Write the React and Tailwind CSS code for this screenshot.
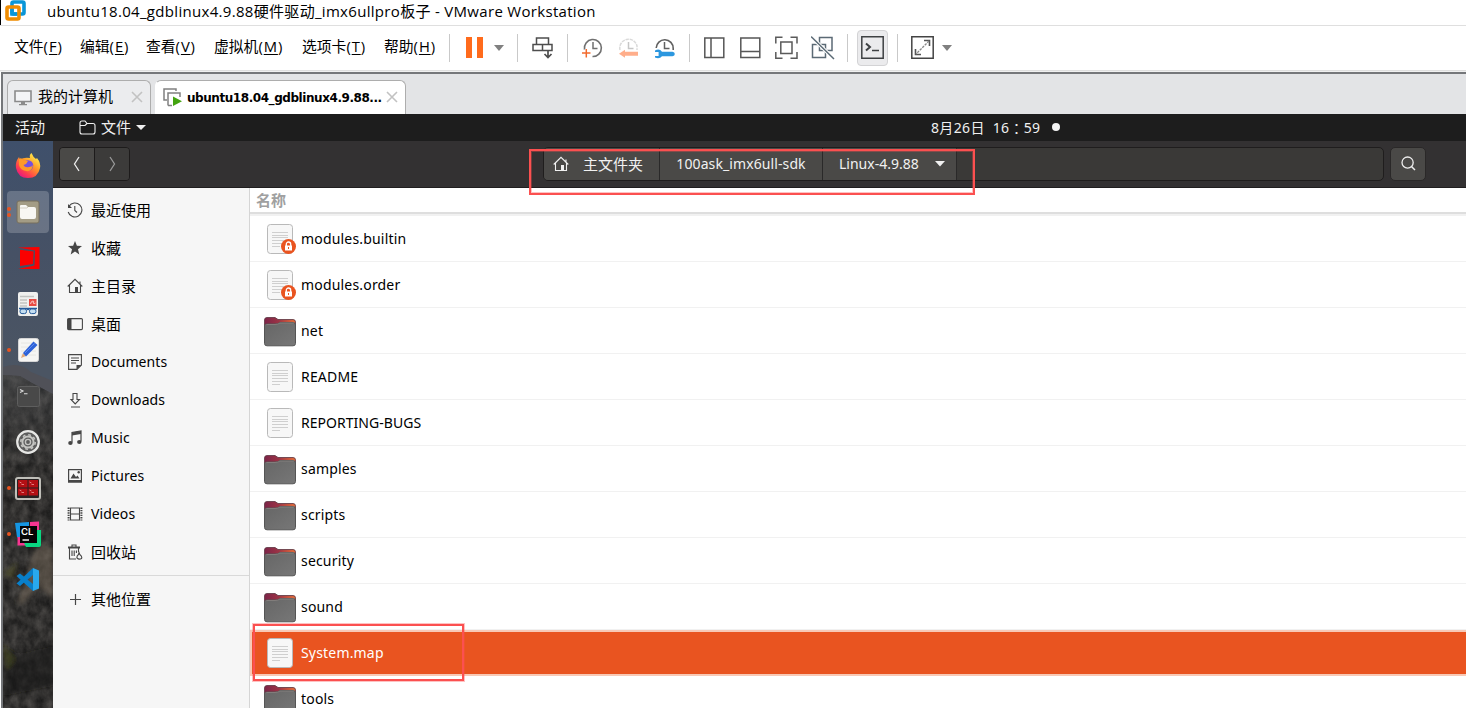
import React from 'react';

const latin = "font-['Noto_Sans','Noto_Sans_CJK_SC',sans-serif]";
const windows = "font-['Open_Sans','Noto_Sans_CJK_SC',sans-serif]";

function Svg({ w = 16, h = w, children, className = '' }) {
  return (
    <svg width={w} height={h} viewBox={`0 0 ${w} ${h}`} fill="none" className={`shrink-0 ${className}`}>
      {children}
    </svg>
  );
}

/* ---------- window title and menus ---------- */

function TitleBar() {
  return (
    <div className="flex h-[25px] shrink-0 items-center border-l border-black bg-white">
      <Svg w={21} h={21} className="ml-1 mb-1">
        <rect x="7" y="2" width="12" height="12" rx="1.5" stroke="#0a96d7" strokeWidth="3.6" />
        <rect x="2" y="7" width="12" height="12" rx="1.5" stroke="#f08c00" strokeWidth="3.6" />
        <path d="M7 9V14H12" stroke="#0a96d7" strokeWidth="3.6" />
      </Svg>
      <span className="ml-[21px] pb-[3px] text-[15px] leading-5 tracking-[0.31px] whitespace-nowrap text-black">
        ubuntu18.04_gdblinux4.9.88硬件驱动_imx6ullpro板子 - VMware Workstation
      </span>
    </div>
  );
}

const menus = [
  ['文件', 'F', 'w-[66px]'],
  ['编辑', 'E', 'w-[66px]'],
  ['查看', 'V', 'w-[68px]'],
  ['虚拟机', 'M', 'w-[88px]'],
  ['选项卡', 'T', 'w-[82px]'],
  ['帮助', 'H', 'w-[65px]'],
];

function Separator({ className }) {
  return <div className={`h-7 w-px shrink-0 bg-[#c9c9c9] ${className}`} />;
}

function Caret({ className }) {
  return (
    <Svg w={10} h={6} className={className}>
      <path d="M0 0H10L5 6Z" fill="#808080" />
    </Svg>
  );
}

function MenuBar() {
  return (
    <div className="flex h-[46px] shrink-0 items-center border-y border-[#dfdfdf] bg-white pb-px pl-[14px]">
      {menus.map(([label, key, width]) => (
        <span key={label} className={`${width} shrink-0 pb-[2px] text-[14.8px] whitespace-nowrap text-black`}>
          {label}
          <span className="tracking-[0.9px]">
            (<span className="underline underline-offset-2">{key}</span>)
          </span>
        </span>
      ))}
      <Separator />
      <Svg w={17} h={21} className="ml-4">
        <path d="M0 0H6V21H0ZM11 0H17V21H11Z" fill="#ff6b1c" />
      </Svg>
      <Caret className="ml-[11px]" />
      <Separator className="ml-[13px]" />
      <Svg w={22} h={22} className="ml-[14px]">
        <path d="M4.5 1H16.5V7.5H4.5ZM1 7.5H20V13.5H1ZM10.5 7.5V13.5" stroke="#4d4d4d" strokeWidth="1.5" />
        <path d="M16 13.5V20M12.5 17L16 20.5L19.5 17" stroke="#4d4d4d" strokeWidth="1.7" />
      </Svg>
      <Separator className="ml-[13px]" />
      <Svg w={22} h={22} className="ml-[14px]">
        <path d="M2.5 12.5A8.5 8.5 0 1 1 10.5 19.5" stroke="#707070" strokeWidth="1.6" />
        <path d="M11 5V11.5H15.5" stroke="#707070" strokeWidth="1.5" />
        <path d="M0 16H8.5M4.3 12V20.5" stroke="#f26a2c" strokeWidth="1.5" />
      </Svg>
      <Svg w={22} h={22} className="ml-[14px]">
        <path d="M2 13A8.7 8.7 0 0 1 19 9V13" stroke="#dadada" strokeWidth="1.5" strokeDasharray="3.4 .8" />
        <path d="M10.5 5V11.5H15.5" stroke="#c6c6c6" strokeWidth="1.5" />
        <path d="M1 16.7L7 12.8V14.8H20V18.8H7V20.8Z" fill="#ffae8b" />
      </Svg>
      <Svg w={22} h={22} className="ml-[14px]">
        <path d="M2.2 11A8.5 8.5 0 0 1 19.2 11.5V13" stroke="#606060" strokeWidth="1.6" />
        <path d="M10.5 5V11.5H15.5" stroke="#606060" strokeWidth="1.5" />
        <path d="M1 13.4Q5.5 11 8 14.8H18.5Q20.8 15 20.8 17Q20.8 19 18.5 19.2H8Q5.5 22.5 1 20.6V19H4.6V15H1Z" fill="#2c97df" />
      </Svg>
      <Separator className="ml-[13px]" />
      <Svg w={22} h={22} className="ml-[14px]">
        <path d="M.8 1H19.8V20.5H.8ZM7 1V20.5" stroke="#565656" strokeWidth="1.5" />
      </Svg>
      <Svg w={22} h={22} className="ml-[14px]">
        <path d="M.8 1H19.8V20.5H.8ZM.8 14.5H19.8" stroke="#565656" strokeWidth="1.5" />
      </Svg>
      <Svg w={24} h={24} className="ml-[13px]">
        <path d="M.8 7.5V1.2H7.5M15.5 1.2H22V7.5M22 16V22.3H15.5M7.5 22.3H.8V16M5.8 6H17V17.5H5.8Z" stroke="#5a5a5a" strokeWidth="1.5" />
      </Svg>
      <Svg w={24} h={24} className="ml-[12px]">
        <path d="M12 1.5H21V14.5H14.5V8.5H8.5V1.5H12M8.5 8.5H1.5V21.5H14.5V14.5H8.5Z" stroke="#5b6a75" strokeWidth="1.5" />
        <path d="M0 .5L23 23" stroke="#fff" strokeWidth="3.4" />
        <path d="M0 .5L23 23" stroke="#5b6a75" strokeWidth="1.5" />
      </Svg>
      <Separator className="ml-[12px]" />
      <div className="ml-[9px] flex h-9 w-[31px] shrink-0 items-center justify-center rounded border border-[#d3d3d5] bg-[#ebebed] pr-px pb-px">
        <Svg w={23} h={23}>
          <path d="M.8.8H22.2V22.2H.8Z" stroke="#3e4143" strokeWidth="1.5" />
          <path d="M5 7.5L9 11L5 14.5" stroke="#3e4143" strokeWidth="2" />
          <path d="M11 14.5H18" stroke="#3e4143" strokeWidth="1.5" />
        </Svg>
      </div>
      <Separator className="ml-[9px]" />
      <Svg w={23} h={23} className="ml-[13px]">
        <path d="M.8.8H22.2V22.2H.8Z" stroke="#444" strokeWidth="1.5" />
        <path d="M13 4.5H18.5V10M4.5 13V18.5H10" stroke="#555" strokeWidth="1.6" />
        <path d="M18 5L5 18" stroke="#888" strokeWidth="1.3" strokeDasharray="2.5 1" />
      </Svg>
      <Caret className="ml-2" />
    </div>
  );
}

function Close({ className }) {
  return (
    <Svg w={12} h={12} className={className}>
      <path d="M1 1L11 11M11 1L1 11" stroke="#c2c2c2" strokeWidth="1.6" />
    </Svg>
  );
}

function Tabs() {
  return (
    <div className="flex h-[40px] shrink-0 items-end bg-[#e3e4e6] pl-1">
      <div className="flex h-[34px] w-[144px] shrink-0 items-center rounded-t-md border border-b-0 border-[#adadad] bg-[#ebecee] pl-[6px]">
        <Svg w={18} h={16} className="mt-px">
          <path d="M1 1H17V11.5H1Z" stroke="#8b8b8b" strokeWidth="1.6" fill="#f4f5f7" />
          <path d="M7 12H11V14H7ZM5 14H13V15.3H5Z" fill="#8b8b8b" />
        </Svg>
        <span className="ml-1.5 pb-[2px] text-[15px] whitespace-nowrap text-black">我的计算机</span>
        <Close className="mb-px ml-[18px]" />
      </div>
      <div className="ml-1 flex h-[34px] w-[251px] shrink-0 items-center rounded-t-md border border-b-0 border-[#adadad] border-l-white bg-white pl-[7px]">
        <Svg w={19} h={19}>
          <path d="M4 12H1V1H13V3M5 17.5V5H17V9M5 17.5H9" stroke="#808080" strokeWidth="1.5" />
          <path d="M10 8.5L19 13.3L10 18Z" fill="#43a410" />
        </Svg>
        <span className="ml-[5px] font-['DejaVu_Sans'] text-[12px] font-bold tracking-[-0.44px] whitespace-nowrap text-black">
          ubuntu18.04_gdblinux4.9.88...
        </span>
        <Close className="mb-px ml-[4px]" />
      </div>
    </div>
  );
}

/* ---------- guest desktop ---------- */

function TopBar() {
  return (
    <div className="flex h-[27px] shrink-0 items-center bg-[#1d1d1d] pl-3 text-[15px] whitespace-nowrap text-[#f0f0f0]">
      <span className="w-16">活动</span>
      <Svg w={17} h={15}>
        <path d="M1 3Q1 1 3 1H6L8 3.5H14Q16 3.5 16 5.5V12Q16 14 14 14H3Q1 14 1 12ZM1 5.5H6L8 3.5" stroke="#f0f0f0" strokeWidth="1.1" />
      </Svg>
      <span className="ml-[5px] w-[31px]">文件</span>
      <Svg w={10} h={5} className="ml-[4px]">
        <path d="M0 0H10L5 5Z" fill="#f0f0f0" />
      </Svg>
      <span className="ml-[785px] text-[14px] tracking-[0.35px]">8月26日</span>
      <span className="ml-[8px] flex items-center text-[14px] tracking-[0.3px]">
        16<span lang="zh-TW" className="font-['Noto_Sans_CJK_TC',sans-serif] leading-5">：</span>59
      </span>
      <span className="mb-[2px] ml-[12px] size-2 rounded-full bg-[#f4f4f4]" />
    </div>
  );
}

const Firefox = () => (
  <Svg w={26} h={26}>
    <defs>
      <linearGradient id="fox" x1="22" y1="2" x2="5" y2="24" gradientUnits="userSpaceOnUse">
        <stop stopColor="#fff44f" /><stop offset=".4" stopColor="#ff9a27" /><stop offset=".75" stopColor="#ff3d4f" /><stop offset="1" stopColor="#e31587" />
      </linearGradient>
    </defs>
    <path d="M15 5Q14 2 16.5 0Q18 4 21 6L22 5Q26 10 25 15Q23 25 13 25Q3 25 1 15Q0 9 4 4L5 7Q8 4 15 5Z" fill="url(#fox)" />
    <circle cx="13" cy="12.5" r="5.3" fill="#7550dd" />
    <path d="M4 6Q7 4 9 8L13 8Q12 11 8.5 12Q10 15 14 14Q17 14 18 12Q17 19 11 18Q5 17 4 12Z" fill="#ff9927" />
  </Svg>
);

const FilesApp = () => (
  <Svg w={24} h={24}>
    <rect x="1" y="1" width="22" height="22" rx="2" fill="#a39c85" stroke="#776f5d" />
    <path d="M4 6Q4 5 5 5H10L12 7H18Q20 7 20 9V17Q20 19 18 19H6Q4 19 4 17Z" fill="#f8f7f3" />
    <path d="M4 8H11L12 7" stroke="#d5d0c3" />
  </Svg>
);

const RedApp = () => (
  <Svg w={22} h={22} className="ml-[2px]">
    <path d="M0 .5L21.5 0V22H0L16.5 18.5L17 3.5Z" fill="#fb0000" />
    <path d="M2 2.8L15.6 4.4L15 17L2 19Z" fill="#fb0000" />
  </Svg>
);

const Reader = () => (
  <Svg w={20} h={24}>
    <rect width="20" height="24" rx="2" fill="#f0f0ee" />
    <path d="M2 4.5H16M2 8H9M2 11H9M2 14H9" stroke="#c2c4c1" strokeWidth="1.3" />
    <rect x="11" y="7" width="7.5" height="7" fill="#e74a42" />
    <path d="M12.5 12Q13 9 15 9Q16.5 9 15 11Q16 12 17.5 11" stroke="#fff" strokeWidth=".7" />
    <path d="M1 16.5H19M9 18Q10 16 11 18" stroke="#245b9b" strokeWidth="1.3" />
    <rect x="2" y="17" width="6.5" height="4.6" rx="2" fill="#c4def1" stroke="#245b9b" />
    <rect x="11.5" y="17" width="6.5" height="4.6" rx="2" fill="#c4def1" stroke="#245b9b" />
  </Svg>
);

const Editor = () => (
  <Svg w={21} h={24}>
    <rect x=".5" y=".5" width="20" height="23" rx="2" fill="#f5f5f3" stroke="#d5d5d5" />
    <path d="M3 5H18M3 9H18M3 13H18M3 17H18" stroke="#e6e6e2" />
    <path d="M3 20L5 15L8 18Z" fill="#e4a875" />
    <path d="M5 15L15.5 3.5L19.5 7L8 18.5Z" fill="#2d62d8" />
    <path d="M7 15L16.5 5.5" stroke="#5c88ee" />
  </Svg>
);

const Terminal = () => (
  <Svg w={23} h={21}>
    <rect x=".5" y=".5" width="22" height="20" rx="2" fill="#494949" stroke="#5e5e5e" />
    <path d="M3 3.5L6 5L3 6.5M7 7.8H10.5" stroke="#ddd" strokeWidth="1.1" />
  </Svg>
);

const Settings = () => (
  <Svg w={24} h={24}>
    <circle cx="12" cy="12" r="10.8" fill="#5d5d5d" stroke="#e7e7e5" strokeWidth="2.2" />
    <circle cx="12" cy="12" r="5.6" stroke="#c4c4c1" strokeWidth="2" />
    <circle cx="12" cy="12" r="7.2" stroke="#c4c4c1" strokeWidth="1.6" strokeDasharray="2.8 2.85" />
    <circle cx="12" cy="12" r="2.6" stroke="#c4c4c1" strokeWidth="1.4" />
  </Svg>
);

const Terminator = () => (
  <Svg w={26} h={23}>
    <rect x="1" y="1" width="24" height="21" rx="2" fill="#272222" stroke="#c0bfb9" strokeWidth="2" />
    <path d="M3 3H12.5V10.5H3ZM13.5 3H23V10.5H13.5ZM3 11.5H12.5V18.5H3ZM13.5 11.5H23V18.5H13.5Z" fill="#b30f14" />
    <path d="M4.5 5L6.5 6M6.5 7.5H9M14.5 5L16.5 6M16.5 7.5H19M4.5 13L6.5 14M6.5 15.5H9M14.5 13L16.5 14M16.5 15.5H19" stroke="#e58a8a" strokeWidth=".9" />
  </Svg>
);

const CLion = () => (
  <span className="relative flex shrink-0">
    <Svg w={27} h={27}>
      <path d="M0 2L14 1V14L5 18L2 16Z" fill="#1596e3" />
      <path d="M14 1L24 .5V11L15 14V1ZM2.5 16H11V24.5H2.5Z" fill="#f83591" />
      <path d="M22 9H26V24Q26 26 24 26H11L9 22H22Z" fill="#09d681" />
      <path d="M5 5H22V22H5Z" fill="#050505" />
      <path d="M7.5 19H14" stroke="#fff" strokeWidth="1.4" />
    </Svg>
    <span className="absolute top-[6px] left-[6.5px] font-['Inter'] text-[9.5px] leading-[9px] font-semibold text-white">CL</span>
  </span>
);

const Code = () => (
  <Svg w={24} h={24}>
    <path d="M17 0L23 2.5V20.5L17 23Z" fill="#29a9ee" />
    <path d="M17 0V7L4 18L0.5 15.5ZM0.5 8L4 5.5L17 16V23Z" fill="#087fca" />
  </Svg>
);

const apps = [
  [Firefox, 0], [FilesApp, 2, true], [RedApp, 0], [Reader, 0], [Editor, 1],
  [Terminal, 0], [Settings, 0], [Terminator, 1], [CLion, 1], [Code, 0],
];

function Wallpaper() {
  return (
    <svg width="50" height="567" viewBox="0 0 50 567" preserveAspectRatio="none" className="absolute inset-0">
      <defs>
        <linearGradient id="sky" x2="0" y2="1">
          <stop stopColor="#3f506b" /><stop offset=".2" stopColor="#465165" /><stop offset=".4" stopColor="#4b5563" />
        </linearGradient>
        <filter id="rock" x="0" y="0" width="100%" height="100%" colorInterpolationFilters="sRGB">
          <feTurbulence type="fractalNoise" baseFrequency=".12 .09" numOctaves="4" seed="8" />
          <feColorMatrix values=".26 0 0 0 .065  .25 0 0 0 .065  .24 0 0 0 .065  0 0 0 0 1" />
        </filter>
        <filter id="soft"><feGaussianBlur stdDeviation="2" /></filter>
        <linearGradient id="haze" x2="0" y2="1"><stop stopColor="#5a5d61" stopOpacity=".45" /><stop offset="1" stopColor="#5a5d61" stopOpacity="0" /></linearGradient>
        <clipPath id="ridge"><path d="M0 234L17 235L29 242L50 253V567H0Z" /></clipPath>
      </defs>
      <rect width="50" height="567" fill="url(#sky)" />
      <path d="M0 226Q17 220 28 231L50 240V270H0Z" fill="#505158" />
      <g clipPath="url(#ridge)">
        <rect y="220" width="50" height="347" fill="#333" filter="url(#rock)" />
        <rect y="220" width="50" height="110" fill="url(#haze)" />
        <g filter="url(#soft)">
          <path d="M30 412L40 402L50 408V458L35 445L20 463L14 461L22 441Z" fill="#75695a" opacity=".5" />
          <path d="M0 506L17 513L50 505V545L0 555Z" fill="#161812" opacity=".55" />
          <path d="M0 503L12 518L4 529ZM0 432L14 422L10 438Z" fill="#5c5b22" opacity=".45" />
        </g>
      </g>
    </svg>
  );
}

function Dock() {
  return (
    <nav className="relative flex w-[50px] shrink-0 flex-col overflow-hidden">
      <Wallpaper />
      <div className="relative flex flex-col pt-[2px]">
        {apps.map(([Icon, dots, active], i) => (
          <div key={i} className="flex h-[46px] items-center">
            <div className={`relative ml-1 flex size-[42px] items-center justify-center rounded ${active ? 'bg-white/20' : ''}`}>
              <Icon />
              {dots > 0 && (
                <span className="absolute top-0 left-0 flex h-full flex-col justify-center gap-[2px]">
                  {Array.from({ length: dots }, (_, d) => (
                    <span key={d} className="size-1 rounded-full bg-[#e95420]" />
                  ))}
                </span>
              )}
            </div>
          </div>
        ))}
      </div>
    </nav>
  );
}

function House({ color }) {
  return (
    <Svg>
      <path d="M.7 8.5L8 1.3L15.3 8.5M2.5 7V14.5H13.5V7M13 6V3.5" stroke={color} strokeWidth="1.1" />
      <path d="M8 9H11V14.5H8Z" fill={color} />
    </Svg>
  );
}

function HeaderBar() {
  return (
    <div className="flex h-[47px] shrink-0 items-center border-b border-[#201e1f] bg-[#333132] pb-px pl-[6px]">
      <div className="flex h-[34px] w-[71px] shrink-0 overflow-hidden rounded-[4px] border border-[#1d1b1b]">
        <span className="flex w-[35px] items-center justify-center border-r border-[#1d1b1b] bg-[#4a4947]">
          <Svg w={8} h={16}><path d="M6 1L1.5 8L6 15" stroke="#eee" strokeWidth="1.3" /></Svg>
        </span>
        <span className="flex grow items-center justify-center bg-[#3c3b3a]">
          <Svg w={8} h={16}><path d="M2 1L6.5 8L2 15" stroke="#999" strokeWidth="1.3" /></Svg>
        </span>
      </div>
      <div className="ml-[413px] flex h-[34px] w-[841px] shrink-0 overflow-hidden rounded-[5px] border border-[#1f1d1d] bg-[#3a3937] text-[14px] whitespace-nowrap text-[#f1f1f1]">
        <span className="flex w-[116px] items-center border-r border-[#2a2929] bg-[#4a4947] pl-[9px]">
          <House color="#f1f1f1" />
          <span className="ml-[14px] pt-px text-[15px]">主文件夹</span>
        </span>
        <span className="flex w-[163px] items-center justify-center border-r border-[#2a2929] bg-[#4a4947] tracking-[0.1px]">
          100ask_imx6ull-sdk
        </span>
        <span className="flex w-[134px] items-center border-r border-[#2a2929] bg-[#4a4947] pl-4">
          <span className="w-20">Linux-4.9.88</span>
          <Svg w={10} h={6} className="ml-4"><path d="M0 0H10L5 5.5Z" fill="#f1f1f1" /></Svg>
        </span>
      </div>
      <div className="ml-[6px] flex h-[34px] w-[36px] shrink-0 items-center justify-center rounded-[5px] border border-[#2a2828] bg-[#4a4947]">
        <Svg w={15} h={15}>
          <circle cx="6.6" cy="6.6" r="5.6" stroke="#eee" strokeWidth="1.3" />
          <path d="M10.5 10.5L14 14" stroke="#eee" strokeWidth="1.5" />
        </Svg>
      </div>
    </div>
  );
}

const ink = '#464646';
const places = [
  ['最近使用', <Svg><path d="M2 4.2A7 7 0 1 1 1.2 10M7.8 4V8.5L10 10.5" stroke={ink} strokeWidth="1.1" /><path d="M1 2V6H5Z" fill={ink} /></Svg>],
  ['收藏', <Svg><path d="M8 1L9.9 5.8L15 6.1L11 9.3L12.3 14.5L8 11.6L3.7 14.5L5 9.3L1 6.1L6.1 5.8Z" fill={ink} /></Svg>],
  ['主目录', <House color={ink} />],
  ['桌面', <Svg><rect x=".6" y="2.6" width="14.8" height="11" rx="1" stroke={ink} strokeWidth="1.1" /><path d="M1 3H4.5V13.5H1Z" fill={ink} /></Svg>],
  ['Documents', <Svg><path d="M1.6.6H14.4V11L10 15.4H1.6ZM4 4H12M4 6.5H12M4 9H9" stroke={ink} strokeWidth="1.1" /><path d="M9.5 15.5V11H14.5Z" fill={ink} /></Svg>],
  ['Downloads', <Svg><path d="M6 1.5H10V7.5H12.5L8.2 12L4 7.5H6ZM4 15H13" stroke={ink} strokeWidth="1.1" /></Svg>],
  ['Music', <Svg><path d="M5 12.5V2.5L14 1V11.5" stroke={ink} strokeWidth="1.2" /><path d="M5 2.5L14 1V4L5 5.5Z" fill={ink} /><ellipse cx="3.4" cy="13" rx="2.2" ry="1.9" fill={ink} /><ellipse cx="12.3" cy="12" rx="2.2" ry="1.9" fill={ink} /></Svg>],
  ['Pictures', <Svg><path d="M1.6 1.6H14.4V14H1.6Z" stroke={ink} strokeWidth="1.2" /><path d="M3.5 10.5L6.5 5.5L9 9L10.5 7.5L12.5 10.5ZM1 12H15V14.6H1Z" fill={ink} /><circle cx="11.7" cy="4.2" r="1.2" fill={ink} /></Svg>],
  ['Videos', <Svg><path d="M1.6 1.5V14.5M14.4 1.5V14.5" stroke={ink} strokeWidth="2" strokeDasharray="1.4 1" /><path d="M3.5 2H12.5V14H3.5ZM3.5 8H12.5" stroke={ink} strokeWidth="1.1" /></Svg>],
  ['回收站', <Svg><path d="M5 3V1H9V3M2.5 4V15H9M11.5 4V8M5 6.5V12M7.2 6.5V12M9.4 6.5V9" stroke={ink} strokeWidth="1.1" /><path d="M1 2.5H13V4.5H1Z" fill={ink} /><path d="M12 8.5L11.5 10.5Q9.5 12 10 14Q12 16 14.5 14.5Q15.5 12.5 12.8 10.5Z" stroke={ink} strokeWidth="1.1" /></Svg>],
];

function Place({ label, icon }) {
  return (
    <div className="flex h-[38px] items-center pl-[14px]">
      {icon}
      <span className={`ml-2 whitespace-nowrap ${/^[A-Z]/.test(label) ? 'pb-px text-[14px] tracking-[0.08px]' : 'pt-px text-[15px]'}`}>{label}</span>
    </div>
  );
}

function Sidebar() {
  return (
    <aside className="w-[197px] shrink-0 border-r border-[#d5d5d5] bg-[#f6f6f6] pt-[3px] text-black">
      {places.map(([label, icon]) => <Place key={label} label={label} icon={icon} />)}
      <div className="mt-1 mb-[4px] h-px bg-[#d9d9d9]" />
      <Place label="其他位置" icon={<Svg><path d="M8.5 3V14M3 8.5H14" stroke={ink} strokeWidth="1.2" /></Svg>} />
    </aside>
  );
}

const files = [
  ['modules.builtin', 'locked'], ['modules.order', 'locked'], ['net', 'folder'],
  ['README', 'file'], ['REPORTING-BUGS', 'file'], ['samples', 'folder'],
  ['scripts', 'folder'], ['security', 'folder'], ['sound', 'folder'],
  ['System.map', 'file'], ['tools', 'folder'],
];

function FileIcon({ kind }) {
  if (kind === 'folder') {
    return (
      <Svg w={32} h={32}>
        <defs>
          <linearGradient id="flap"><stop stopColor="#7c2448" /><stop offset=".45" stopColor="#9b3345" /><stop offset="1" stopColor="#e56d38" /></linearGradient>
          <linearGradient id="front" y2="1"><stop stopColor="#666" /><stop offset="1" stopColor="#777" /></linearGradient>
        </defs>
        <path d="M.5 5Q.5 2.5 3 2.5H11L14 4.5H29Q31.5 4.5 31.5 7V20H.5Z" fill="url(#flap)" stroke="#5b3340" strokeWidth=".8" />
        <path d="M.5 11Q.5 9 3 9H11Q14 9 16 7.5H29Q31.5 7.5 31.5 10V28.5Q31.5 30.8 29 30.8H3Q.5 30.8 .5 28.5Z" fill="url(#front)" stroke="#555" />
        <path d="M1.5 10Q2 9.5 4 9.5H11Q14 9.5 16 8H30" stroke="#8a8583" strokeWidth=".8" />
      </Svg>
    );
  }
  return (
    <Svg w={32} h={32}>
      <rect x="3.5" y="1.5" width="25" height="29" rx="3" fill="#f7f7f7" stroke="#b9b9b9" />
      <path d="M8 9.5H24M8 12.5H24M8 14.5H24M8 17.5H24M8 20.5H24M8 23.5H16" stroke="#cfcfcf" />
      {kind === 'locked' && (
        <>
          <circle cx="24.5" cy="23.5" r="7.5" fill="#e95420" />
          <path d="M22.3 23V21.2A2.2 2.2 0 0 1 26.7 21.2V23" stroke="#fff" strokeWidth="1.3" />
          <path d="M21 22.5H28V27.5H21Z" fill="#fff" />
          <path d="M24 24H25V26H24Z" fill="#e95420" />
        </>
      )}
    </Svg>
  );
}

function FileList() {
  return (
    <main className="min-w-0 grow overflow-hidden bg-white">
      <div className="flex h-[28px] items-center border-b-2 border-[#f1f1f1]">
        <div className="flex h-[26px] w-full items-center border-b-2 border-[#dedede] pl-[6px] text-[15px] font-bold text-[#a0a0a0]">
          名称
        </div>
      </div>
      {files.map(([name, kind]) => {
        const selected = name === 'System.map';
        return (
          <div
            key={name}
            className={`flex h-[46px] items-center text-[14px] whitespace-nowrap ${
              name === 'REPORTING-BUGS' ? 'tracking-[0.03px]' : 'tracking-[0.18px]'
            } ${
              selected
                ? 'border-y-2 border-l-2 border-[#f8c9b6] bg-[#e95420] pl-3 text-white'
                : 'border-b border-[#f1f1f1] pl-[14px] text-black'
            }`}
          >
            <FileIcon kind={kind} />
            <span className={`ml-[5px] ${selected ? 'pb-[2px]' : ''}`}>{name}</span>
          </div>
        );
      })}
    </main>
  );
}

export default function App() {
  return (
    <div className={`relative flex h-[708px] w-[1466px] flex-col overflow-hidden bg-white ${windows}`}>
      <TitleBar />
      <MenuBar />
      <div className="h-px shrink-0 bg-[#f0f0f0]" />
      <div className="ml-px flex min-h-0 grow flex-col border-t-2 border-l-2 border-[#75777a]">
        <Tabs />
        <div className={`flex min-h-0 grow flex-col ${latin}`}>
          <TopBar />
          <div className="flex min-h-0 grow">
            <Dock />
            <div className="flex min-w-0 grow flex-col">
              <HeaderBar />
              <div className="flex min-h-0 grow">
                <Sidebar />
                <FileList />
              </div>
            </div>
          </div>
        </div>
      </div>
      <div className="absolute top-[149px] left-[529px] h-[46px] w-[446px] border-2 border-[#fb5050] ring-1 ring-[#fb5050]/35 ring-inset" />
      <div className="absolute top-[624px] left-[253px] h-[57px] w-[211px] border-2 border-[#fb5050] ring-1 ring-[#fb5050]/35" />
    </div>
  );
}
